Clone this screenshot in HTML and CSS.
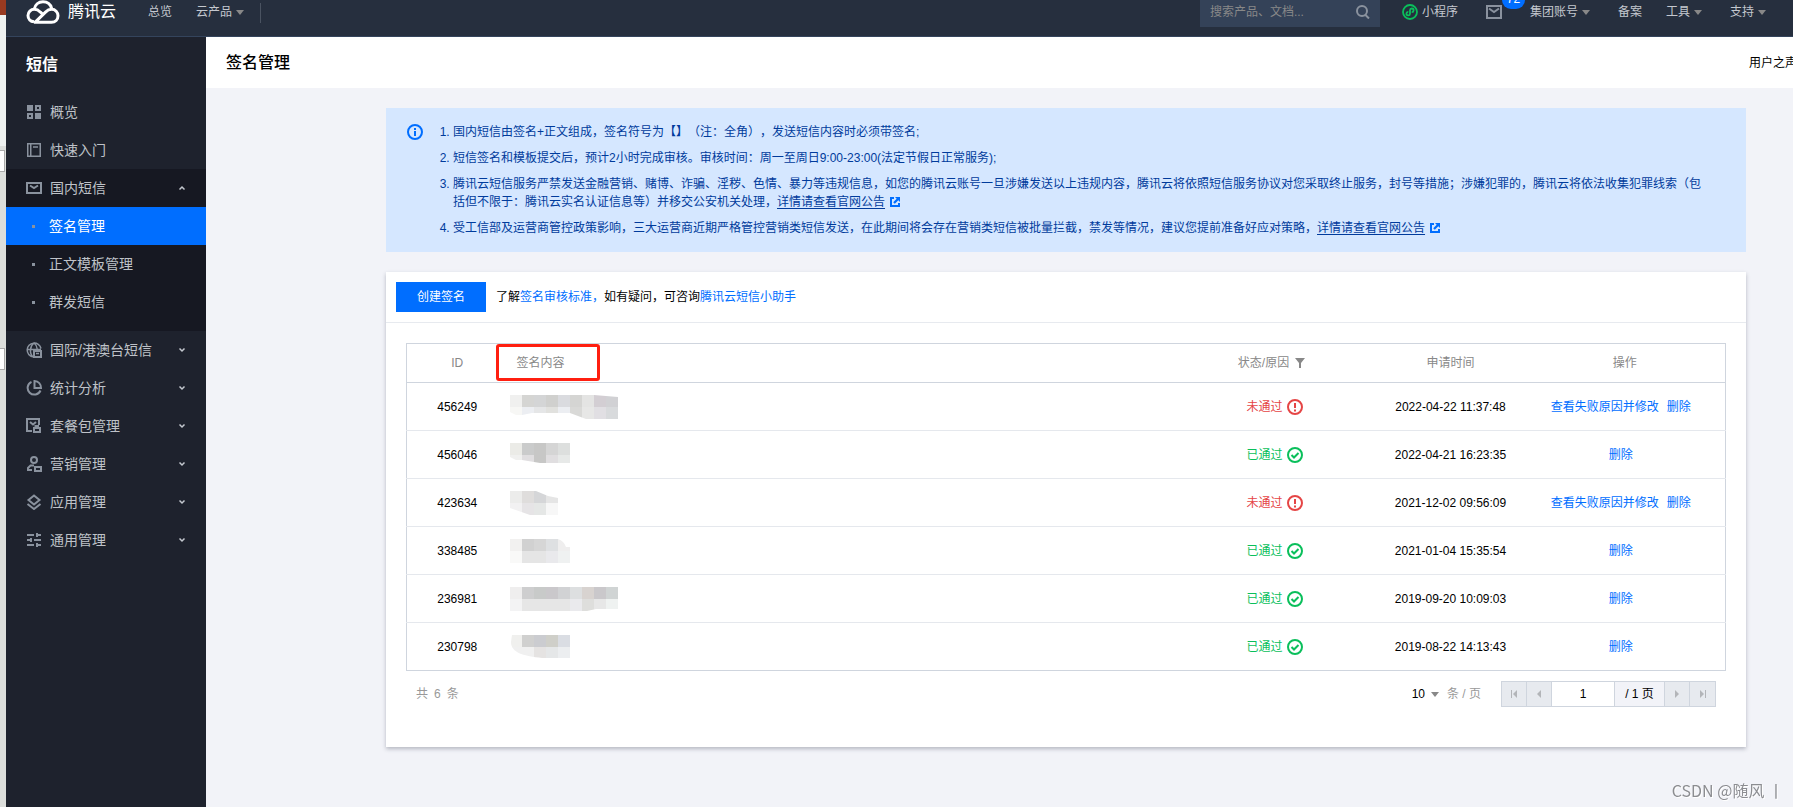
FILE: index.html
```html
<!DOCTYPE html>
<html lang="zh-CN">
<head>
<meta charset="utf-8">
<title>签名管理 - 短信</title>
<link rel="stylesheet" href="styles.css">
</head>
<body>
<div class="edge" aria-hidden="true">
  <span class="edge-brand"></span>
  <span class="edge-light"></span>
  <span class="edge-tab"></span>
  <span class="edge-space"></span>
  <span class="edge-tab"></span>
</div>
<div class="app">
  <header class="topbar">
    <a class="logo" href="#">
      <svg class="logo-mark" width="34" height="25" viewBox="0 0 34 25" fill="none" stroke="#fff" stroke-width="3"><path d="M8 21.800C4.500 21.500 2 19 2 15.500C2 12 4.800 9.300 8.300 9.300C11 9.300 12.800 10.500 14.500 12.200L17.500 15"/><path d="M8.200 9.200C9 5 12.500 1.800 17 1.800C21.200 1.800 24.500 4.400 25.600 8.300"/><path d="M8 22.300H25.500C29.300 22.300 32 19.400 32 15.800C32 12.200 29.300 9.300 25.600 9.300C23 9.300 21.200 10.400 19.500 12.100L9.500 21.800"/></svg>
      <span>腾讯云</span>
    </a>
    <nav class="topnav">
      <a href="#">总览</a>
      <a class="has-caret" href="#">云产品<i class="caret"></i></a>
    </nav>
    <span class="divider"></span>
    <div class="toptools">
      <label class="search">
        <input type="search" placeholder="搜索产品、文档..." aria-label="搜索产品、文档">
        <svg width="14" height="14" viewBox="0 0 14 14" fill="none" stroke="#8a929e" stroke-width="2"><circle cx="6" cy="6" r="5"/><path d="M9 9.500l4 4"/></svg>
      </label>
      <a class="mini" href="#"><svg width="16" height="16" viewBox="0 0 16 16" fill="none" stroke="#0abf5b" stroke-width="1.800"><circle cx="8" cy="8" r="7"/><path d="M6.300 7.800a1.800 1.800 0 1 0 1.700 1.900V6.200a1.800 1.800 0 1 1 1.700 1.900"/></svg>小程序</a>
      <a class="mail" href="#" aria-label="消息"><svg width="16" height="14" viewBox="0 0 16 14" fill="none" stroke="#8a929e" stroke-width="2"><path d="M1 1h14v12H1z"/><path d="M3 3.500l5 3.500 5-3.500"/></svg><span class="badge">72</span></a>
      <a class="has-caret" href="#">集团账号<i class="caret"></i></a>
      <a href="#">备案</a>
      <a class="has-caret" href="#">工具<i class="caret"></i></a>
      <a class="has-caret" href="#">支持<i class="caret"></i></a>
    </div>
  </header>
  <div class="body">
    <aside class="sidebar">
      <h2>短信</h2>
      <ul class="menu">
        <li><a href="#"><svg class="ico" viewBox="0 0 16 16"><path fill="#8a929e" fill-rule="evenodd" d="M1 1h6v6H1zM9 1h6v6H9zM11 3v2h2V3zM1 9h6v6H1zM3 11v2h2v-2zM9 9h6v6H9z"/></svg>概览</a></li>
        <li><a href="#"><svg class="ico" viewBox="0 0 16 16" fill="none" stroke="#8a929e" stroke-width="1.500"><path d="M1.750 1.750h12.500v12.500H1.750zM4.750 2v12M7 5h5"/></svg>快速入门</a></li>
        <li class="open">
          <a href="#"><svg class="ico" viewBox="0 0 16 16" fill="none" stroke="#8a929e" stroke-width="2"><path d="M1 3h14v10H1zM4 5.500l4 2.500 4-2.500"/></svg>国内短信<svg class="chev" viewBox="0 0 8 6"><path d="M1.500 4.500L4 2l2.500 2.500"/></svg></a>
          <ul class="submenu">
            <li><a class="active" href="#">签名管理</a></li>
            <li><a href="#">正文模板管理</a></li>
            <li><a href="#">群发短信</a></li>
          </ul>
        </li>
        <li><a href="#"><svg class="ico" viewBox="0 0 16 16" fill="none" stroke="#8a929e" stroke-width="1.500"><path d="M7 15A7 7 0 1 1 15 6.500M1 7.500h14M7 15C3 11 4 4 8 1c2 1.500 3 3.500 3.200 6"/><path stroke-width="2" d="M8 9h7v6H8z"/><path d="M10 11.500h3"/></svg>国际/港澳台短信<svg class="chev" viewBox="0 0 8 6"><path d="M1.500 1.500L4 4l2.500-2.500"/></svg></a></li>
        <li><a href="#"><svg class="ico" viewBox="0 0 16 16" fill="none" stroke="#8a929e" stroke-width="2"><path d="M5.500 1.800A6.700 6.700 0 1 0 14.500 10.500M8.500 1v7H15C15 4 12.500 1.200 8.500 1z"/></svg>统计分析<svg class="chev" viewBox="0 0 8 6"><path d="M1.500 1.500L4 4l2.500-2.500"/></svg></a></li>
        <li><a href="#"><svg class="ico" viewBox="0 0 16 16" fill="none" stroke="#8a929e" stroke-width="2"><path d="M6 13H1V1h12v6M4 4l3 2.500L10 4M8 10h6v4H8zM9.500 10V8H12v2"/></svg>套餐包管理<svg class="chev" viewBox="0 0 8 6"><path d="M1.500 1.500L4 4l2.500-2.500"/></svg></a></li>
        <li><a href="#"><svg class="ico" viewBox="0 0 16 16" fill="none" stroke="#8a929e" stroke-width="2"><circle cx="8" cy="4" r="3"/><path d="M8 9.500H4.500L2 12v2h4M9 11h6v4H9z"/></svg>营销管理<svg class="chev" viewBox="0 0 8 6"><path d="M1.500 1.500L4 4l2.500-2.500"/></svg></a></li>
        <li><a href="#"><svg class="ico" viewBox="0 0 16 16" fill="none" stroke="#8a929e" stroke-width="2"><path d="M8 1.500L13.500 6 8 10.500 2.500 6zM1.500 10L8 15l6.500-5"/></svg>应用管理<svg class="chev" viewBox="0 0 8 6"><path d="M1.500 1.500L4 4l2.500-2.500"/></svg></a></li>
        <li><a href="#"><svg class="ico" viewBox="0 0 16 16" fill="none" stroke="#8a929e" stroke-width="2"><path d="M1 3h7M11 3h4M11 1v4M1 8h4M8 8h7M5 6v4M1 13h7M11 13h4M11 11v4"/></svg>通用管理<svg class="chev" viewBox="0 0 8 6"><path d="M1.500 1.500L4 4l2.500-2.500"/></svg></a></li>
      </ul>
    </aside>
    <main class="main">
      <div class="titlebar"><h1>签名管理</h1><a href="#">用户之声</a></div>
      <div class="content">
        <section class="alert">
          <svg class="info" width="16" height="16" viewBox="0 0 16 16"><circle cx="8" cy="8" r="7" fill="none" stroke="#006eff" stroke-width="2"/><path fill="#006eff" d="M7 4h2v2H7zM7 7h2v5H7z"/></svg>
          <ol>
            <li>国内短信由签名+正文组成，签名符号为【】（注：全角），发送短信内容时必须带签名;</li>
            <li>短信签名和模板提交后，预计2小时完成审核。审核时间：周一至周日9:00-23:00(法定节假日正常服务);</li>
            <li>腾讯云短信服务严禁发送金融营销、赌博、诈骗、淫秽、色情、暴力等违规信息，如您的腾讯云账号一旦涉嫌发送以上违规内容，腾讯云将依照短信服务协议对您采取终止服务，封号等措施；涉嫌犯罪的，腾讯云将依法收集犯罪线索（包括但不限于：腾讯云实名认证信息等）并移交公安机关处理，<a href="#">详情请查看官网公告</a><svg class="ext" viewBox="0 0 10 10"><path fill="#006eff" d="M0 0h4v2H2v6h6V6h2v4H0zM5 0h5v5L8.300 3.300 4.800 6.800 3.200 5.200 6.700 1.700z"/></svg></li>
            <li>受工信部及运营商管控政策影响，三大运营商近期严格管控营销类短信发送，在此期间将会存在营销类短信被批量拦截，禁发等情况，建议您提前准备好应对策略，<a href="#">详情请查看官网公告</a><svg class="ext" viewBox="0 0 10 10"><path fill="#006eff" d="M0 0h4v2H2v6h6V6h2v4H0zM5 0h5v5L8.300 3.300 4.800 6.800 3.200 5.200 6.700 1.700z"/></svg></li>
          </ol>
        </section>
        <section class="card">
          <div class="toolbar">
            <button class="primary" type="button">创建签名</button>
            <p>了解<a href="#">签名审核标准，</a>如有疑问，可咨询<a href="#">腾讯云短信小助手</a></p>
          </div>
          <div class="card-body">
            <table class="grid">
              <colgroup><col class="c-id"><col><col class="c-status"><col class="c-time"><col class="c-ops"></colgroup>
              <thead>
                <tr><th>ID</th><th class="sig"><span class="mark"></span>签名内容</th><th><span class="filter">状态/原因<svg width="10" height="10" viewBox="0 0 10 10"><path fill="#888" d="M0 0h10L6 5v5H4V5z"/></svg></span></th><th>申请时间</th><th class="ops">操作</th></tr>
              </thead>
              <tbody>
                <tr><td>456249</td><td class="sig"><svg class="mosaic" viewBox="0 0 108 24"><clipPath id="m1"><path d="M0 0h84l24 2v22H76L60 18H22L12 20H6L0 17z"/></clipPath><g clip-path="url(#m1)"><path fill="#f0f0ef" d="M0 0h12v12H0z"/><path fill="#d5d5d3" d="M12 0h12v12H12zM60 0h12v12H60z"/><path fill="#d4d5d6" d="M24 0h12v12H24z"/><path fill="#d0d0ce" d="M36 0h12v12H36z"/><path fill="#dadbdf" d="M48 0h12v12H48z"/><path fill="#e4e4e3" d="M72 0h12v12H72z"/><path fill="#d3ced3" d="M84 0h12v12H84z"/><path fill="#d1d1d4" d="M96 0h12v12H96z"/><path fill="#f7f7f5" d="M0 12h12v12H0z"/><path fill="#eceef2" d="M12 12h12v12H12zM48 12h12v12H48z"/><path fill="#e5e6e7" d="M24 12h12v12H24z"/><path fill="#e1e1de" d="M36 12h12v12H36z"/><path fill="#d9d9d7" d="M60 12h12v12H60z"/><path fill="#e7e7e6" d="M72 12h12v12H72z"/><path fill="#e1dfe3" d="M84 12h12v12H84z"/><path fill="#d8dadc" d="M96 12h12v12H96z"/></g></svg></td><td class="state"><span class="status fail">未通过<svg viewBox="0 0 16 16"><circle cx="8" cy="8" r="7"/><path d="M8 4v5M8 10.500v2"/></svg></span></td><td>2022-04-22 11:37:48</td><td class="ops"><a href="#">查看失败原因并修改</a><a href="#">删除</a></td></tr>
                <tr><td>456046</td><td class="sig"><svg class="mosaic" viewBox="0 0 108 24"><clipPath id="m2"><path d="M0 0h60v20H30L12 17H6L0 14z"/></clipPath><g clip-path="url(#m2)"><path fill="#ebebe7" d="M0 0h12v12H0z"/><path fill="#cacbcb" d="M12 0h12v12H12z"/><path fill="#c7c7c6" d="M24 0h12v24H24z"/><path fill="#d5d5d5" d="M36 0h12v12H36z"/><path fill="#dddfde" d="M48 0h12v12H48z"/><path fill="#f0f0ef" d="M0 12h12v12H0z"/><path fill="#e0dee0" d="M12 12h12v12H12zM36 12h12v12H36z"/><path fill="#e7e9e8" d="M48 12h12v12H48z"/></g></svg></td><td class="state"><span class="status pass">已通过<svg viewBox="0 0 16 16"><circle cx="8" cy="8" r="7"/><path d="M4.500 8l2.500 2.500 4.500-4.500"/></svg></span></td><td>2022-04-21 16:23:35</td><td class="ops"><a href="#">删除</a></td></tr>
                <tr><td>423634</td><td class="sig"><svg class="mosaic" viewBox="0 0 108 24"><clipPath id="m3"><path d="M0 0h26l12 5 10 2v17H20L0 17z"/></clipPath><g clip-path="url(#m3)"><path fill="#ececeb" d="M0 0h12v12H0z"/><path fill="#dfdddc" d="M12 0h12v12H12z"/><path fill="#d5d6d8" d="M24 0h12v12H24z"/><path fill="#e5e5e5" d="M36 0h12v12H36z"/><path fill="#f2f1f2" d="M0 12h12v12H0z"/><path fill="#e6e4e6" d="M12 12h12v12H12z"/><path fill="#e5e7e6" d="M24 12h12v12H24z"/><path fill="#f7f7f7" d="M36 12h12v12H36z"/></g></svg></td><td class="state"><span class="status fail">未通过<svg viewBox="0 0 16 16"><circle cx="8" cy="8" r="7"/><path d="M8 4v5M8 10.500v2"/></svg></span></td><td>2021-12-02 09:56:09</td><td class="ops"><a href="#">查看失败原因并修改</a><a href="#">删除</a></td></tr>
                <tr><td>338485</td><td class="sig"><svg class="mosaic" viewBox="0 0 108 24"><clipPath id="m4"><path d="M0 0h48q6 2 8 8h4v16H0z"/></clipPath><g clip-path="url(#m4)"><path fill="#f2f1f0" d="M0 0h12v12H0z"/><path fill="#d1d1d1" d="M12 0h12v12H12z"/><path fill="#d6d6d6" d="M24 0h12v12H24z"/><path fill="#dee0e2" d="M36 0h12v12H36z"/><path fill="#efeeee" d="M48 0h12v12H48z"/><path fill="#f9f9f8" d="M0 12h12v12H0z"/><path fill="#e5e5e5" d="M12 12h24v12H12z"/><path fill="#e9e9ec" d="M36 12h12v12H36z"/><path fill="#eff1f1" d="M48 12h12v12H48z"/></g></svg></td><td class="state"><span class="status pass">已通过<svg viewBox="0 0 16 16"><circle cx="8" cy="8" r="7"/><path d="M4.500 8l2.500 2.500 4.500-4.500"/></svg></span></td><td>2021-01-04 15:35:54</td><td class="ops"><a href="#">删除</a></td></tr>
                <tr><td>236981</td><td class="sig"><svg class="mosaic" viewBox="0 0 108 24"><clipPath id="m5"><path d="M0 0h108v22L86 22l-9 2H0z"/></clipPath><g clip-path="url(#m5)"><path fill="#efeeee" d="M0 0h12v12H0z"/><path fill="#cececf" d="M12 0h12v12H12z"/><path fill="#c8cac9" d="M24 0h12v12H24z"/><path fill="#cac8cb" d="M36 0h12v12H36zM84 0h12v12H84z"/><path fill="#d1d2d4" d="M48 0h12v12H48z"/><path fill="#dddfe0" d="M60 0h12v12H60z"/><path fill="#d8d3d0" d="M72 0h12v12H72z"/><path fill="#d0d4d4" d="M96 0h12v12H96z"/><path fill="#f3f3f4" d="M0 12h12v12H0z"/><path fill="#e6e6e6" d="M12 12h48v12H12z"/><path fill="#eaeaed" d="M60 12h12v12H60z"/><path fill="#dededc" d="M72 12h12v12H72z"/><path fill="#e7e7e7" d="M84 12h12v12H84z"/><path fill="#eff2f1" d="M96 12h12v12H96z"/></g></svg></td><td class="state"><span class="status pass">已通过<svg viewBox="0 0 16 16"><circle cx="8" cy="8" r="7"/><path d="M4.500 8l2.500 2.500 4.500-4.500"/></svg></span></td><td>2019-09-20 10:09:03</td><td class="ops"><a href="#">删除</a></td></tr>
                <tr><td>230798</td><td class="sig"><svg class="mosaic" viewBox="0 0 108 24"><clipPath id="m6"><path d="M2 0h58v23H32C14 21 1 18 1 7z"/></clipPath><g clip-path="url(#m6)"><path fill="#f0f0ee" d="M0 0h12v12H0z"/><path fill="#d0d0cf" d="M12 0h12v12H12z"/><path fill="#cbccd0" d="M24 0h12v12H24z"/><path fill="#cfcfc9" d="M36 0h12v12H36z"/><path fill="#dadde3" d="M48 0h12v12H48z"/><path fill="#f0f0f0" d="M0 12h24v12H0z"/><path fill="#e5e3e2" d="M24 12h12v12H24z"/><path fill="#e5e7e8" d="M36 12h12v12H36z"/><path fill="#eceef0" d="M48 12h12v12H48z"/></g></svg></td><td class="state"><span class="status pass">已通过<svg viewBox="0 0 16 16"><circle cx="8" cy="8" r="7"/><path d="M4.500 8l2.500 2.500 4.500-4.500"/></svg></span></td><td>2019-08-22 14:13:43</td><td class="ops"><a href="#">删除</a></td></tr>
              </tbody>
            </table>
            <div class="pager">
              <span class="total">共&ensp;6&ensp;条</span>
              <div class="size"><button type="button">10<i class="caret"></i></button><span>条 / 页</span></div>
              <div class="pages">
                <button type="button" disabled aria-label="首页"><svg viewBox="0 0 8 10"><path d="M1 1h1v8H1zM7 1v8L3 5z"/></svg></button>
                <button type="button" disabled aria-label="上一页"><svg viewBox="0 0 8 10"><path d="M6 1v8L2 5z"/></svg></button>
                <input type="text" value="1" aria-label="页码">
                <span class="of">/ 1 页</span>
                <button type="button" disabled aria-label="下一页"><svg viewBox="0 0 8 10"><path d="M2 1v8l4-4z"/></svg></button>
                <button type="button" disabled aria-label="末页"><svg viewBox="0 0 8 10"><path d="M6 1h1v8H6zM1 1v8l4-4z"/></svg></button>
              </div>
            </div>
          </div>
        </section>
      </div>
    </main>
  </div>
</div>
<div class="watermark">CSDN @随风 丨</div>
</body>
</html>
```
FILE: styles.css
```css
* { box-sizing: border-box; }
body {
  margin: 0;
  display: flex;
  min-height: 100vh;
  overflow: hidden;
  font: 12px/18px "Liberation Sans", "Noto Sans CJK SC", sans-serif;
  text-spacing-trim: space-all;
  color: #000;
  background: #f2f3f8;
}
a { color: inherit; text-decoration: none; }
ul { margin: 0; padding: 0; list-style: none; }
svg { flex: none; display: block; }
button, input { font: inherit; }

.edge { flex: none; width: 6px; display: flex; flex-direction: column; background: #dcdedb; }
.edge-brand { height: 15px; background: #983a20; }
.edge-light { height: 131px; margin-bottom: 4px; background: #eef1ef; }
.edge-tab { width: 5px; height: 22px; background: #fff; border: 1px solid #aaa; border-left: 0; }
.edge-space { height: 176px; }

.app { flex: 1; min-width: 0; display: flex; flex-direction: column; }
.topbar {
  display: flex;
  align-items: flex-start;
  height: 37px;
  padding: 0 23px 0 20px;
  line-height: 24px;
  color: #c4c8cf;
  background: #262f3e;
  border-bottom: 1px solid #34445c;
}
.logo { display: flex; gap: 8px; font-size: 16px; color: #fff; }
.topnav { display: flex; gap: 24px; margin-left: 32px; }
.has-caret { padding-right: 4px; }
.caret {
  display: inline-block;
  margin-left: 4px;
  border: 4px solid transparent;
  border-top: 5px solid #888;
  border-bottom: 0;
  vertical-align: middle;
}
.divider { width: 1px; height: 20px; margin: 3px 0 0 12px; background: #4a5361; }
.toptools { display: flex; align-items: flex-start; gap: 24px; margin-left: auto; }
.search { display: flex; align-items: flex-start; width: 180px; height: 27px; margin-right: -2px; padding: 0 10px; background: #344258; }
.search input { flex: 1; min-width: 0; height: 24px; padding: 0; border: 0; outline: 0; background: none; color: #c4c8cf; }
.search input::placeholder { color: #888; opacity: 1; }
.search svg { margin-top: 5px; }
.mini { display: flex; align-items: center; gap: 4px; }
.mail { position: relative; display: flex; align-items: center; height: 24px; margin: 0 4px; }
.badge {
  position: absolute;
  left: 16px;
  top: -9px;
  width: 23px;
  height: 18px;
  border-radius: 9px;
  background: #006eff;
  color: #fff;
  line-height: 16px;
  text-align: center;
}

.body { flex: 1; display: flex; }
.sidebar { flex: none; width: 200px; background: #1e222d; color: #bfc2c8; font-size: 14px; }
.sidebar h2 { margin: 0; padding: 16px 20px; font-size: 16px; line-height: 24px; color: #fff; }
.menu a { display: flex; align-items: center; height: 38px; padding: 0 20px; }
.ico { width: 16px; height: 16px; margin-right: 8px; }
.chev { width: 8px; height: 6px; margin-left: auto; fill: none; stroke: #c4c8cf; stroke-width: 1.500; }
.open { padding-bottom: 10px; background: #161822; }
.submenu a::before { content: ""; width: 3px; height: 3px; margin: 0 14px 0 6px; background: #8a929e; }
.submenu .active { background: #006eff; color: #fff; }

.main { flex: 1; min-width: 0; }
.titlebar { display: flex; align-items: center; justify-content: space-between; height: 51px; padding-left: 20px; overflow: hidden; background: #fff; }
.titlebar h1 { margin: 0; font-size: 16px; font-weight: 500; line-height: 24px; }
.titlebar a { flex: none; margin-right: -4px; }
.content { display: grid; gap: 20px; padding: 20px 47px 20px 180px; }

.alert { display: flex; gap: 30px; padding: 15px 40px 15px 21px; background: #d5e7ff; color: #003b9c; }
.info { margin-top: 1px; }
.alert ol { display: grid; gap: 8px; margin: 0; padding: 0; }
.alert a { text-decoration: underline; text-underline-offset: 2px; }
.ext { display: inline-block; width: 10px; height: 10px; margin-left: 5px; vertical-align: -1px; }

.card { background: #fff; box-shadow: 0 2px 4px rgba(54, 58, 80, 0.32); }
.toolbar { display: flex; align-items: center; gap: 10px; padding: 10px; border-bottom: 1px solid #e7eaef; }
.toolbar p { margin: 0; }
.toolbar a, .ops a { color: #006eff; }
.primary { width: 90px; height: 30px; padding: 0; border: 0; background: #006eff; color: #fff; }
.card-body { padding: 20px 20px 30px; }
.grid { width: 100%; table-layout: fixed; border-collapse: collapse; border: 1px solid #cfd5de; }
.c-id { width: 101px; }
.c-status { width: 226px; }
.c-time { width: 132px; }
.c-ops { width: 209px; }
.grid th { height: 39px; padding: 0; border-bottom: 1px solid #cfd5de; font-weight: 400; color: #888; }
.grid td { height: 48px; padding: 0; border-bottom: 1px solid #e5e8ed; text-align: center; }
.grid tbody tr:last-child td { border-bottom-color: #cfd5de; }
.grid .sig { text-align: left; padding-left: 2px; }
.grid th.sig { position: relative; padding-left: 9px; }
.grid th.ops { padding-left: 8px; }
.grid .state { padding-left: 6px; }
.mark { position: absolute; left: -12px; top: 0; width: 104px; height: 37px; border: 3px solid #ff1f10; border-radius: 3px; }
.mosaic { width: 108px; height: 24px; }
.filter { display: inline-flex; align-items: center; gap: 6px; }
.status { display: inline-flex; align-items: center; gap: 4px; }
.status svg { width: 16px; height: 16px; fill: none; stroke: currentColor; stroke-width: 2; }
.fail { color: #e54545; }
.pass { color: #0abf5b; }
.ops a + a { margin-left: 8px; }

.pager { display: flex; align-items: center; padding: 10px; color: #999; }
.size { display: flex; align-items: center; gap: 8px; margin-left: auto; }
.size button { padding: 0; border: 0; background: none; color: #000; }
.size .caret { margin-left: 6px; }
.pages { display: flex; margin-left: 20px; border: 1px solid #cfd5de; color: #000; }
.pages > * { height: 24px; border: 0; border-right: 1px solid #cfd5de; }
.pages > :last-child { border-right: 0; }
.pages button { display: grid; place-items: center; width: 25px; padding: 0; background: #e7eaef; }
.pages button svg { width: 8px; height: 10px; fill: #b3b5b9; }
.pages input { width: 63px; padding: 0; outline: 0; text-align: center; background: #fff; }
.of { width: 50px; line-height: 24px; text-align: center; background: #f2f3f8; }

.watermark { position: fixed; right: 9px; bottom: 5px; font: 16px/24px "Noto Sans CJK SC", sans-serif; color: #8c8d91; text-shadow: 1px 1px #fff; }
```
